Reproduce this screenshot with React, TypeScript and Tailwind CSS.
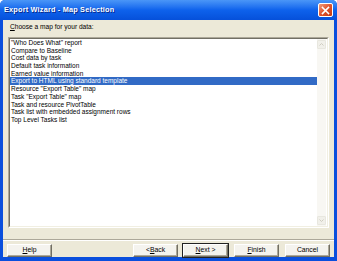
import { useState } from "react";

const maps = [
  '"Who Does What" report',
  "Compare to Baseline",
  "Cost data by task",
  "Default task information",
  "Earned value information",
  "Export to HTML using standard template",
  'Resource "Export Table" map',
  'Task "Export Table" map',
  "Task and resource PivotTable",
  "Task list with embedded assignment rows",
  "Top Level Tasks list",
];

const font = { fontFamily: '"Liberation Sans", Arial, sans-serif' };

const XpButton = ({
  children,
  isDefault = false,
}: {
  children: React.ReactNode;
  isDefault?: boolean;
}) => (
  <button
    className={`w-[45px] h-[13px] flex items-center justify-center text-[6.8px] text-black bg-[#F4F3EE] border-t border-l border-t-white border-l-white border-b border-r border-b-[#716F64] border-r-[#716F64] shadow-[inset_-1px_-1px_0_#ACA899] ${
      isDefault ? "outline outline-1 outline-[#222]" : ""
    }`}
  >
    {children}
  </button>
);

export default function App() {
  const [selected, setSelected] = useState(5);

  return (
    <div
      className="w-[337px] h-[261px] flex flex-col bg-[#0A4FDD] rounded-t-[5px] overflow-hidden"
      style={font}
    >
      {/* Title bar */}
      <div className="h-[20px] flex items-center justify-between pl-[4px] pr-[4px] bg-gradient-to-b from-[#4A96F7] via-[#0E62EC] to-[#0650DA]">
        <span className="text-white font-bold text-[7.3px] tracking-[0.2px] [text-shadow:1px_1px_0_#0A2A8A]">
          Export Wizard - Map Selection
        </span>
        <div className="w-[15px] h-[14px] rounded-[2px] border border-white bg-gradient-to-br from-[#F09A7A] via-[#E0532B] to-[#C23A12] flex items-center justify-center">
          <svg width="9" height="9" viewBox="0 0 9 9">
            <path d="M1.5 1.5 L7.5 7.5 M7.5 1.5 L1.5 7.5" stroke="white" strokeWidth="1.6" strokeLinecap="square" />
          </svg>
        </div>
      </div>

      {/* Body */}
      <div className="flex-1 flex flex-col mx-[3px] mb-[4px] bg-[#ECE9D8]">
        <p className="pl-[7px] pt-[3px] h-[17px] text-[6.6px] text-black leading-[8px]">
          <span className="underline">C</span>hoose a map for your data:
        </p>

        <div className="ml-[5px] mr-[5px] h-[191px] flex border border-t-[#ACA899] border-l-[#ACA899] border-b-white border-r-white">
          <div className="flex-1 flex bg-white border border-t-[#716F64] border-l-[#716F64] border-b-[#F1EFE2] border-r-[#F1EFE2]">
            <ul className="flex-1 pt-0">
              {maps.map((m, i) => (
                <li
                  key={m}
                  onClick={() => setSelected(i)}
                  className={`h-[7.7px] leading-[7.7px] pl-[1px] text-[6.5px] whitespace-nowrap ${
                    selected === i ? "bg-[#316AC5] text-white" : "text-black"
                  }`}
                >
                  {m}
                </li>
              ))}
            </ul>
            {/* Disabled scrollbar */}
            <div className="w-[9px] mr-[1px] flex flex-col justify-between bg-[#F8F7F3]">
              <div className="h-[9px] mt-[1px] rounded-[1px] bg-[#F1F0EA] border border-[#E8E7DF] flex items-center justify-center">
                <svg width="5" height="3" viewBox="0 0 5 3">
                  <path d="M0.5 2.5 L2.5 0.5 L4.5 2.5" stroke="#CFCDC1" fill="none" />
                </svg>
              </div>
              <div className="h-[9px] mb-[1px] rounded-[1px] bg-[#F1F0EA] border border-[#E8E7DF] flex items-center justify-center">
                <svg width="5" height="3" viewBox="0 0 5 3">
                  <path d="M0.5 0.5 L2.5 2.5 L4.5 0.5" stroke="#CFCDC1" fill="none" />
                </svg>
              </div>
            </div>
          </div>
        </div>

        {/* Separator */}
        <div className="mt-[11px] border-t border-t-[#ACA899] border-b border-b-white" />

        {/* Buttons */}
        <div className="flex items-center pl-[4px] pr-[4px] mt-[3px]">
          <XpButton>
            <span className="underline">H</span>elp
          </XpButton>
          <div className="flex-1" />
          <XpButton>
            {"< "}
            <span className="underline">B</span>ack
          </XpButton>
          <div className="w-[5px]" />
          <XpButton isDefault>
            <span className="underline">N</span>ext &gt;
          </XpButton>
          <div className="w-[6px]" />
          <XpButton>
            <span className="underline">F</span>inish
          </XpButton>
          <div className="w-[6px]" />
          <XpButton>Cancel</XpButton>
        </div>
      </div>
    </div>
  );
}
